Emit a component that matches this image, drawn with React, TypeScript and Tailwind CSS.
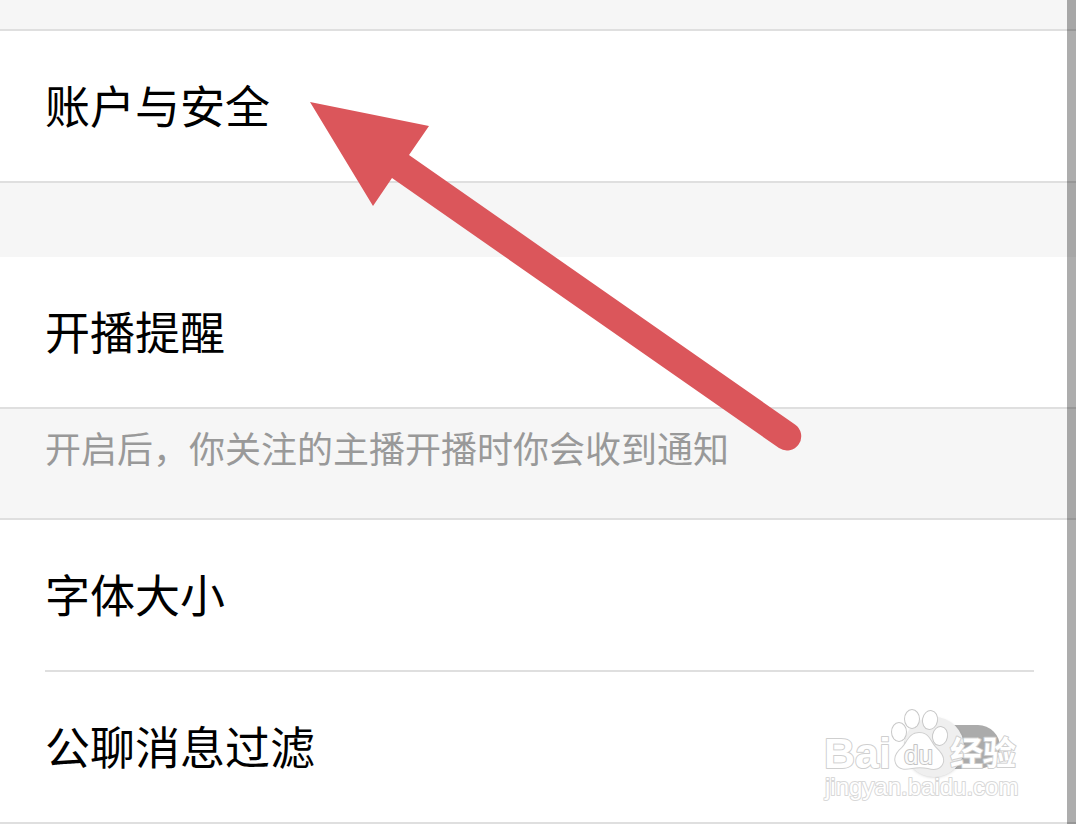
import type { ReactNode } from 'react'

const Row = ({ children, className = '' }: { children: ReactNode, className?: string }) => {
    return (
        <div className={`flex items-center justify-between h-[150px] ${className}`}>
            {children}
        </div>
    )
}

const LinkRow = ({ label }: { label: string }) => {
    return (
        <Row>
            <a href="#" className="flex items-center w-full h-full pb-1">{label}</a>
        </Row>
    )
}

const Switch = ({ id }: { id: string }) => {
    return (
        <span className="relative flex items-center w-24 h-15">
            <input id={id} type="checkbox" role="switch" className="peer appearance-none w-full h-11 rounded-full bg-[#ababab]" />
            <span className="absolute left-0 size-15 rounded-full bg-[#efefef] shadow-sm pointer-events-none peer-checked:left-9"></span>
        </span>
    )
}

const Arrow = () => {
    return (
        <svg className="absolute left-[310px] top-[101px] pointer-events-none" width="492" height="350" viewBox="310 101 492 350" aria-hidden="true">
            <path d="M310 102 L429 126 L409 155 L795 424.500 A14 14 0 0 1 779 448 L392 178 L373 206 Z" fill="#db565b" />
        </svg>
    )
}

const Watermark = () => {
    return (
        <svg className="absolute right-[54px] bottom-[18px] pointer-events-none" width="202" height="102" viewBox="820 704 202 102" fill="#fff" stroke="#cfcfcf" strokeWidth="2" strokeLinejoin="round" paintOrder="stroke">
            <text x="824" y="768" className="font-['Liberation_Sans',sans-serif] font-bold text-[43px]">Bai</text>
            <path d="M919 733 C909 733 908 742 902 748 C896 753 894 758 896 763 C899 770 906 769 912 768 C917 767 923 767 928 768 C935 770 941 769 943 762 C944 756 940 752 935 747 C930 741 929 733 919 733 Z" />
            <g stroke="#c8c8c8">
                <ellipse cx="899" cy="732" rx="7" ry="9" />
                <ellipse cx="912" cy="719" rx="7" ry="9" />
                <ellipse cx="930" cy="720" rx="7" ry="9" transform="rotate(10 930 720)" />
                <ellipse cx="940" cy="736" rx="7" ry="9" transform="rotate(10 940 736)" />
            </g>
            <text x="904" y="764" fill="#fafafa" stroke="#c4c4c4" className="font-['Liberation_Sans',sans-serif] text-[26px]">du</text>
            <text x="950" y="765" className="font-['Noto_Sans_CJK_SC',sans-serif] font-bold text-[33px]">经验</text>
            <text x="825" y="795" stroke="#d8d8d8" className="font-['Liberation_Sans',sans-serif] text-[24px]">jingyan.baidu.com</text>
        </svg>
    )
}

export default function App() {
    return (
        <main className="relative w-full overflow-hidden bg-[#f6f6f6] text-black text-[45px] leading-none font-['Noto_Sans_CJK_SC',sans-serif]">
            <div className="h-[29px]"></div>
            <section className="bg-white border-y-2 border-[#dfdfdf] px-[45px]">
                <LinkRow label="账户与安全" />
            </section>
            <div className="h-[74px]"></div>
            <section className="bg-white border-b-2 border-[#dfdfdf] px-[45px]">
                <LinkRow label="开播提醒" />
            </section>
            <p className="h-[109px] px-[45px] pt-5 text-4xl leading-none text-[#999]">开启后，你关注的主播开播时你会收到通知</p>
            <section className="bg-white border-y-2 border-[#dfdfdf] pl-[45px] pr-[42px]">
                <LinkRow label="字体大小" />
                <Row className="border-t-2 border-[#dfdfdf] box-content pr-[34px]">
                    <label htmlFor="chat-filter" className="pb-1">公聊消息过滤</label>
                    <Switch id="chat-filter" />
                </Row>
            </section>
            <div className="absolute inset-y-0 right-0 w-[9px] bg-black/32"></div>
            <Arrow />
            <Watermark />
        </main>
    )
}
